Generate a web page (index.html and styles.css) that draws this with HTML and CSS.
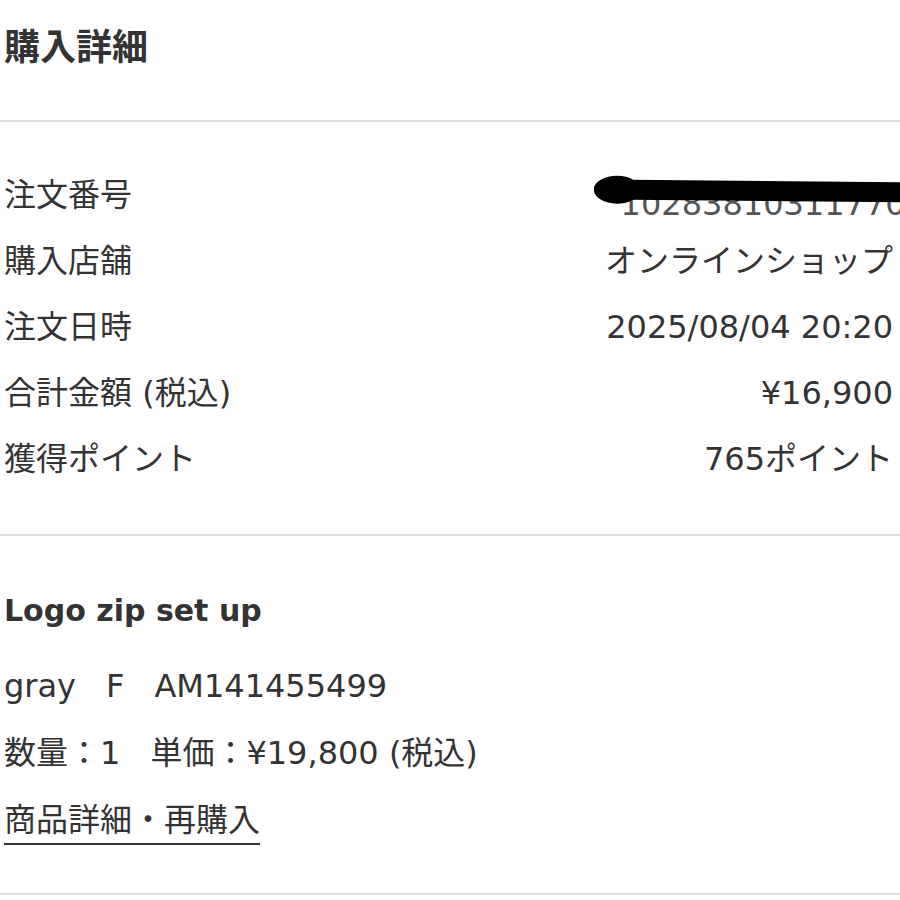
FILE: index.html
```html
<!DOCTYPE html>
<html lang="ja">

<head>
    <meta charset="UTF-8">
    <meta name="viewport" content="width=device-width, initial-scale=1.0">
    <title>購入詳細</title>
    <link rel="stylesheet" href="styles.css">
</head>

<body>
    <div class="page">
        <h1 class="title">購入詳細</h1>

        <section class="info">
            <div class="row">
                <span class="label">注文番号</span>
                <span class="value order">
                    <span class="order-no">102838103117700</span>
                    <!-- 塗りつぶし -->
                    <span class="redact"></span>
                </span>
            </div>
            <div class="row">
                <span class="label">購入店舗</span>
                <span class="value">オンラインショップ</span>
            </div>
            <div class="row">
                <span class="label">注文日時</span>
                <span class="value">2025/08/04 20:20</span>
            </div>
            <div class="row">
                <span class="label">合計金額 (税込)</span>
                <span class="value">¥16,900</span>
            </div>
            <div class="row">
                <span class="label">獲得ポイント</span>
                <span class="value">765ポイント</span>
            </div>
        </section>

        <section class="item">
            <h2 class="item-name">Logo zip set up</h2>
            <p class="item-line">gray<span class="sp"></span>F<span class="sp"></span>AM141455499</p>
            <p class="item-line">数量：1<span class="sp"></span>単価：¥19,800 (税込)</p>
            <a class="item-link" href="#">商品詳細・再購入</a>
        </section>
    </div>
</body>

</html>
```

FILE: styles.css
```css
* {
    margin: 0;
    padding: 0;
    box-sizing: border-box;
}

body {
    background-color: #fff;
    color: #333;
    font-family: "DejaVu Sans", "Noto Sans CJK JP", sans-serif;
    overflow: hidden;
}

.page {
    width: 900px;
}

.title {
    font-family: "Noto Sans CJK JP", sans-serif;
    font-size: 36px;
    font-weight: 700;
    line-height: 44px;
    padding: 22px 4px 54px;
    border-bottom: 2px solid #ddd;
}

/* 注文情報 */
.info {
    display: flex;
    flex-direction: column;
    gap: 22px;
    padding: 51px 7px 53px 4px;
    border-bottom: 2px solid #ddd;
}

.row {
    display: flex;
    justify-content: space-between;
    align-items: center;
    font-size: 32px;
    line-height: 44px;
}

.order {
    position: relative;
    margin-right: -33px;
    white-space: nowrap;
}

.order-no {
    color: #555;
    position: relative;
    top: 9px;
}

.redact {
    position: absolute;
    left: -27px;
    right: -10px;
    top: 8px;
    height: 20px;
    background: #000;
    border-radius: 10px 0 0 10px;
    transform: rotate(0.5deg);
}

.redact::before {
    content: "";
    position: absolute;
    left: 0;
    top: -4px;
    width: 46px;
    height: 28px;
    background: #000;
    border-radius: 50%;
}

/* 商品 */
.item {
    display: flex;
    flex-direction: column;
    align-items: flex-start;
    padding: 53px 4px 48px;
    border-bottom: 2px solid #ddd;
}

.item-name {
    font-size: 30px;
    font-weight: 700;
    line-height: 44px;
    margin-bottom: 31px;
}

.item-line {
    font-size: 32px;
    line-height: 44px;
    margin-bottom: 23px;
}

.sp {
    display: inline-block;
    width: 30px;
}

.item-link {
    color: #333;
    font-size: 32px;
    line-height: 44px;
    text-decoration: none;
    border-bottom: 2px solid #333;
    padding-bottom: 1px;
}
```
